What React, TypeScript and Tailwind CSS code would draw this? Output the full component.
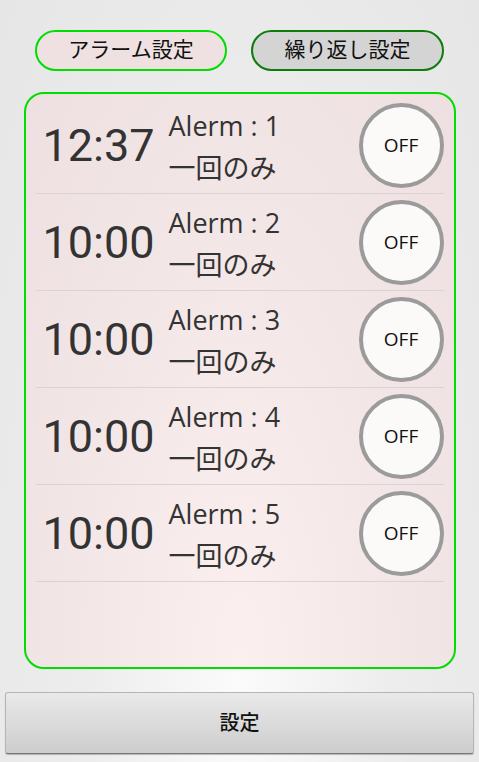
const alarms = [
  { time: '12:37', no: 1 },
  { time: '10:00', no: 2 },
  { time: '10:00', no: 3 },
  { time: '10:00', no: 4 },
  { time: '10:00', no: 5 },
];

const font = "font-['Roboto','Noto_Sans_CJK_JP',sans-serif]";
const droid = "font-['Open_Sans','Noto_Sans_CJK_JP',sans-serif]";

const AlarmRow = ({ time, no }: { time: string; no: number }) => {
  return (
    <div className="flex h-[97px] items-center border-b border-[#d9d3d3] pl-[7px]">
      <div className="w-[126px] text-[45px] leading-none text-[#333]">{time}</div>
      <div className={`flex flex-1 flex-col text-[#333] ${droid}`}>
        <span className="mt-[2px] text-[27px] leading-[34px]">Alerm : {no}</span>
        <span className="mt-[9px] text-[27px] leading-[32px]">一回のみ</span>
      </div>
      <button
        className={`flex h-[85px] w-[85px] items-center justify-center rounded-full border-4 border-[#9b9b9b] bg-[#fbfaf9] text-[19px] text-[#111] ${droid}`}
        type="button"
      >
        OFF
      </button>
    </div>
  );
};

export default function App() {
  return (
    <div
      className={`flex h-[762px] w-[479px] flex-col items-center bg-[radial-gradient(ellipse_at_50%_90%,#fbfbfb_0%,#ededed_45%,#e6e6e6_100%)] ${font}`}
    >
      <div className="mt-[30px] flex w-full justify-between px-[35px]">
        <button
          className="h-[41px] w-[192px] rounded-full border-2 border-[#00dd00] bg-[#efe1e1] text-[21px] text-[#111]"
          type="button"
        >
          アラーム設定
        </button>
        <button
          className="h-[41px] w-[193px] rounded-full border-2 border-[#0c7d0c] bg-[#d4d4d4] text-[21px] text-[#111]"
          type="button"
        >
          繰り返し設定
        </button>
      </div>

      <div className="mt-[21px] flex h-[577px] w-[432px] flex-col rounded-[20px] border-2 border-[#00dd00] bg-[radial-gradient(ellipse_at_50%_100%,#fbefef_0%,#f3e6e6_55%,#eee0e0_100%)] px-[10px] pt-[3px]">
        {alarms.map((a) => (
          <AlarmRow key={a.no} no={a.no} time={a.time} />
        ))}
      </div>

      <button
        className="mt-[23px] h-[62px] w-[469px] rounded-[3px] border border-[#b5b5b5] border-b-[#777] bg-gradient-to-b from-[#e9e9e9] to-[#cdcdcd] text-[20px] font-medium text-[#111] shadow-[0_1px_1px_rgba(0,0,0,0.25)]"
        type="button"
      >
        設定
      </button>
    </div>
  );
}
